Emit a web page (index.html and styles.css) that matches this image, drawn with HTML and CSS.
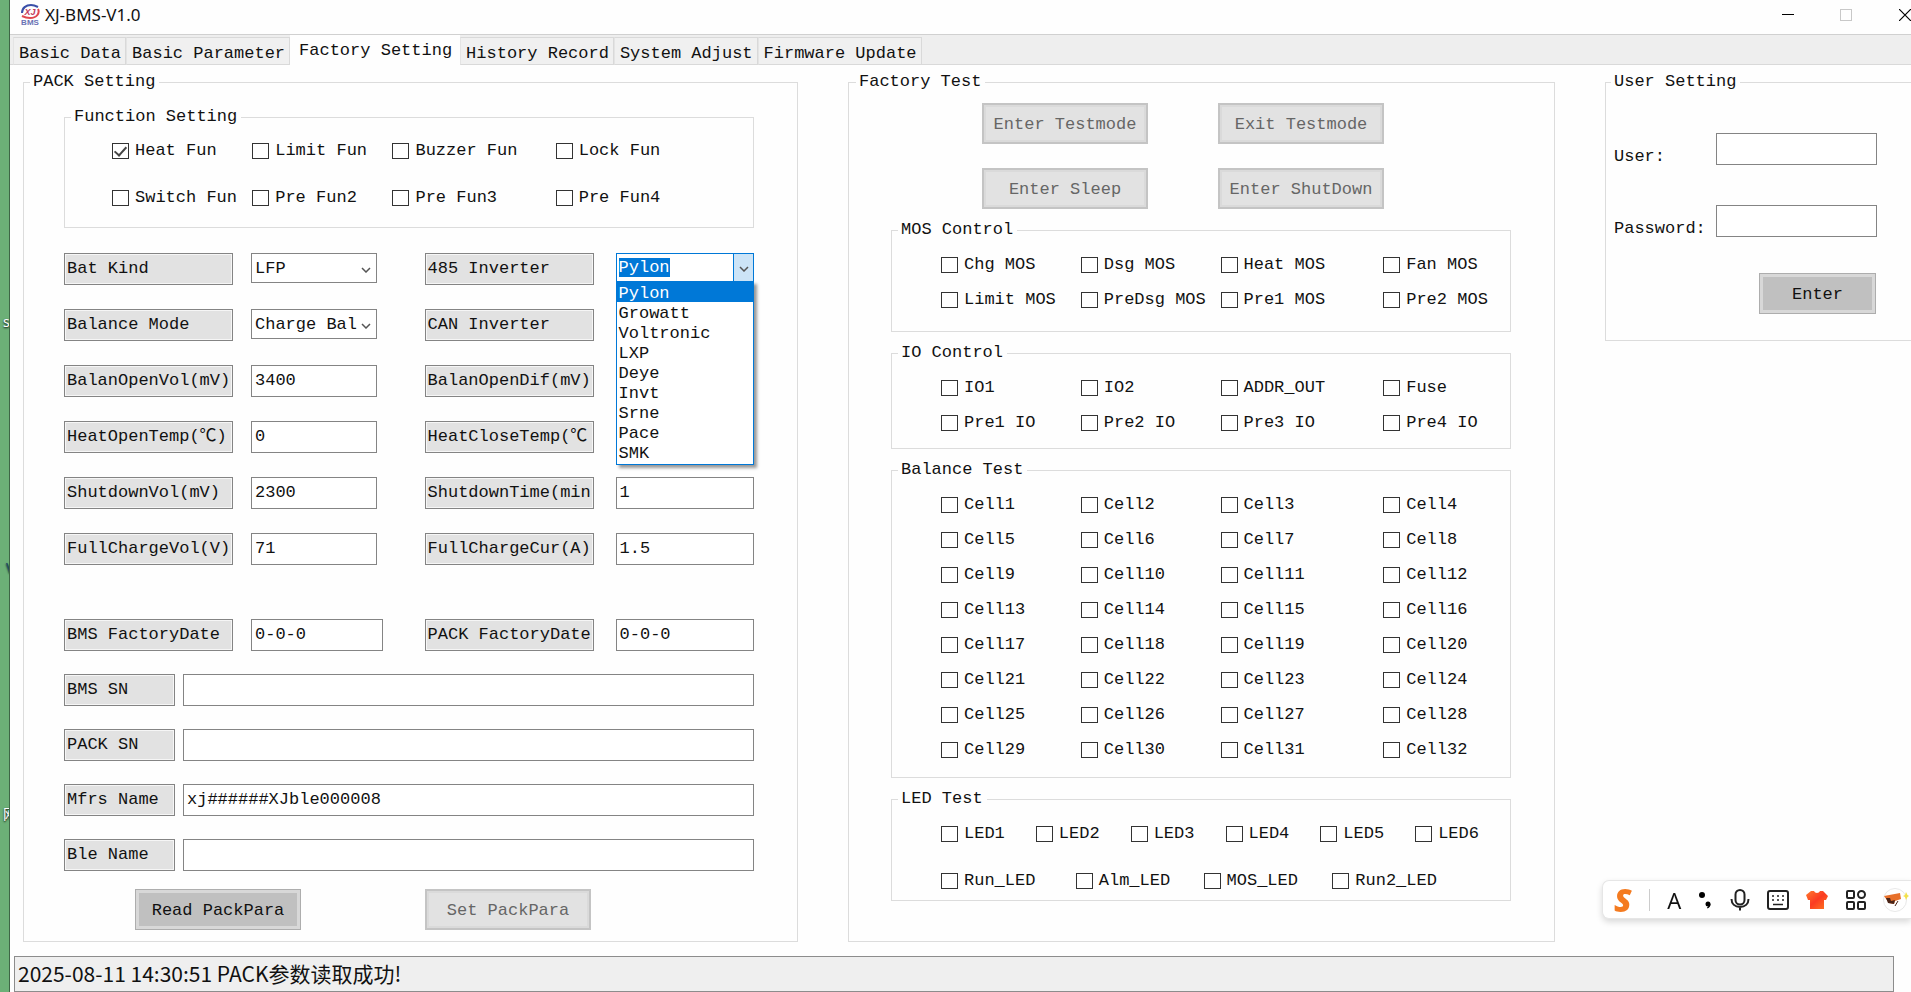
FILE: index.html
```html
<!DOCTYPE html>
<html lang="en">

<head>
    <meta charset="UTF-8">
    <meta name="viewport" content="width=device-width, initial-scale=1.0">
    <title>XJ-BMS-V1.0</title>
    <link rel="stylesheet" href="styles.css">
</head>

<body>
    <div class="desktop" aria-hidden="true">
        <span class="desktop-text first">s</span>
        <span class="desktop-text second">V</span>
        <span class="desktop-text third">网</span>
    </div>

    <div class="window">
        <header class="title-bar">
            <svg class="app-icon" viewBox="0 0 20 22" width="20" height="22">
                <path d="M2 9C2 4 6 1 11 1c3 0 5 1 7 2" fill="none" stroke="#3a4fa8" stroke-width="2" />
                <path d="M18 5c2 4-1 9-8 9-4 0-6-1-8-2" fill="none" stroke="#e0484f" stroke-width="2" />
                <text x="10" y="11" class="icon-xj">XJ</text>
                <text x="10" y="21" class="icon-bms">BMS</text>
            </svg>
            <h1>XJ-BMS-V1.0</h1>
            <div class="window-buttons">
                <button type="button" aria-label="Minimize">
                    <svg width="12" height="12"><path d="M0 5.5h12" stroke="#000" /></svg>
                </button>
                <button type="button" aria-label="Maximize" disabled>
                    <svg width="12" height="12"><rect x=".5" y=".5" width="11" height="11" fill="none" stroke="#c8c8c8" /></svg>
                </button>
                <button type="button" class="close" aria-label="Close">
                    <svg width="12" height="12"><path d="M0 0l13 13M0 12L12 0" stroke="#000" stroke-width="1.2" /></svg>
                </button>
            </div>
        </header>

        <nav class="tabs" role="tablist">
            <button type="button" role="tab">Basic Data</button>
            <button type="button" role="tab">Basic Parameter</button>
            <button type="button" role="tab" class="active" aria-selected="true">Factory Setting</button>
            <button type="button" role="tab">History Record</button>
            <button type="button" role="tab">System Adjust</button>
            <button type="button" role="tab">Firmware Update</button>
        </nav>

        <main class="main-content">
            <fieldset class="pack-setting">
                <legend>PACK Setting</legend>

                <fieldset class="group function-setting">
                    <legend>Function Setting</legend>
                    <div class="check-grid">
                        <label class="check"><input type="checkbox" checked>Heat Fun</label>
                        <label class="check"><input type="checkbox">Limit Fun</label>
                        <label class="check"><input type="checkbox">Buzzer Fun</label>
                        <label class="check"><input type="checkbox">Lock Fun</label>
                        <label class="check"><input type="checkbox">Switch Fun</label>
                        <label class="check"><input type="checkbox">Pre Fun2</label>
                        <label class="check"><input type="checkbox">Pre Fun3</label>
                        <label class="check"><input type="checkbox">Pre Fun4</label>
                    </div>
                </fieldset>

                <div class="param-grid">
                    <label class="tag" for="batKind">Bat Kind</label>
                    <div class="combo">
                        <select id="batKind">
                            <option>LFP</option>
                        </select>
                        <svg class="chevron" width="10" height="6"><path d="M1 1l4 4 4-4" /></svg>
                    </div>
                    <label class="tag" for="inverter485">485 Inverter</label>
                    <div class="combo open">
                        <input type="text" id="inverter485" value="Pylon" role="combobox" aria-expanded="true">
                        <button type="button" class="drop" aria-label="Open list">
                            <svg width="10" height="6"><path d="M1 1l4 4 4-4" /></svg>
                        </button>
                        <select class="drop-list" id="inverterList" size="9" aria-label="485 Inverter">
                            <option selected>Pylon</option>
                            <option>Growatt</option>
                            <option>Voltronic</option>
                            <option>LXP</option>
                            <option>Deye</option>
                            <option>Invt</option>
                            <option>Srne</option>
                            <option>Pace</option>
                            <option>SMK</option>
                        </select>
                    </div>

                    <label class="tag" for="balanceMode">Balance Mode</label>
                    <div class="combo">
                        <select id="balanceMode">
                            <option>Charge Bal</option>
                        </select>
                        <svg class="chevron" width="10" height="6"><path d="M1 1l4 4 4-4" /></svg>
                    </div>
                    <label class="tag" for="inverterCan">CAN Inverter</label>
                    <div class="combo">
                        <select id="inverterCan"></select>
                    </div>

                    <label class="tag" for="balanOpenVol">BalanOpenVol(mV)</label>
                    <input type="text" id="balanOpenVol" value="3400">
                    <label class="tag" for="balanOpenDif">BalanOpenDif(mV)</label>
                    <input type="text" id="balanOpenDif">

                    <label class="tag" for="heatOpenTemp">HeatOpenTemp(℃)</label>
                    <input type="text" id="heatOpenTemp" value="0">
                    <label class="tag" for="heatCloseTemp">HeatCloseTemp(℃</label>
                    <input type="text" id="heatCloseTemp">

                    <label class="tag" for="shutdownVol">ShutdownVol(mV)</label>
                    <input type="text" id="shutdownVol" value="2300">
                    <label class="tag" for="shutdownTime">ShutdownTime(min</label>
                    <input type="text" id="shutdownTime" value="1">

                    <label class="tag" for="fullChargeVol">FullChargeVol(V)</label>
                    <input type="text" id="fullChargeVol" value="71">
                    <label class="tag" for="fullChargeCur">FullChargeCur(A)</label>
                    <input type="text" id="fullChargeCur" value="1.5">
                </div>

                <div class="param-grid dates">
                    <label class="tag" for="bmsDate">BMS FactoryDate</label>
                    <input type="text" id="bmsDate" value="0-0-0">
                    <label class="tag" for="packDate">PACK FactoryDate</label>
                    <input type="text" id="packDate" value="0-0-0">
                </div>

                <div class="name-grid">
                    <label class="tag" for="bmsSn">BMS SN</label>
                    <input type="text" id="bmsSn">
                    <label class="tag" for="packSn">PACK SN</label>
                    <input type="text" id="packSn">
                    <label class="tag" for="mfrsName">Mfrs Name</label>
                    <input type="text" id="mfrsName" value="xj######XJble000008">
                    <label class="tag" for="bleName">Ble Name</label>
                    <input type="text" id="bleName">
                </div>

                <div class="pack-buttons">
                    <button type="button" class="btn">Read PackPara</button>
                    <button type="button" class="btn" disabled>Set PackPara</button>
                </div>
            </fieldset>

            <fieldset class="factory-test">
                <legend>Factory Test</legend>

                <div class="test-buttons">
                    <button type="button" class="btn" disabled>Enter Testmode</button>
                    <button type="button" class="btn" disabled>Exit Testmode</button>
                    <button type="button" class="btn" disabled>Enter Sleep</button>
                    <button type="button" class="btn" disabled>Enter ShutDown</button>
                </div>

                <fieldset class="group mos-control">
                    <legend>MOS Control</legend>
                    <div class="check-grid">
                        <label class="check"><input type="checkbox">Chg MOS</label>
                        <label class="check"><input type="checkbox">Dsg MOS</label>
                        <label class="check"><input type="checkbox">Heat MOS</label>
                        <label class="check"><input type="checkbox">Fan MOS</label>
                        <label class="check"><input type="checkbox">Limit MOS</label>
                        <label class="check"><input type="checkbox">PreDsg MOS</label>
                        <label class="check"><input type="checkbox">Pre1 MOS</label>
                        <label class="check"><input type="checkbox">Pre2 MOS</label>
                    </div>
                </fieldset>

                <fieldset class="group">
                    <legend>IO Control</legend>
                    <div class="check-grid">
                        <label class="check"><input type="checkbox">IO1</label>
                        <label class="check"><input type="checkbox">IO2</label>
                        <label class="check"><input type="checkbox">ADDR_OUT</label>
                        <label class="check"><input type="checkbox">Fuse</label>
                        <label class="check"><input type="checkbox">Pre1 IO</label>
                        <label class="check"><input type="checkbox">Pre2 IO</label>
                        <label class="check"><input type="checkbox">Pre3 IO</label>
                        <label class="check"><input type="checkbox">Pre4 IO</label>
                    </div>
                </fieldset>

                <fieldset class="group balance-test">
                    <legend>Balance Test</legend>
                    <div class="check-grid">
                        <label class="check"><input type="checkbox">Cell1</label>
                        <label class="check"><input type="checkbox">Cell2</label>
                        <label class="check"><input type="checkbox">Cell3</label>
                        <label class="check"><input type="checkbox">Cell4</label>
                        <label class="check"><input type="checkbox">Cell5</label>
                        <label class="check"><input type="checkbox">Cell6</label>
                        <label class="check"><input type="checkbox">Cell7</label>
                        <label class="check"><input type="checkbox">Cell8</label>
                        <label class="check"><input type="checkbox">Cell9</label>
                        <label class="check"><input type="checkbox">Cell10</label>
                        <label class="check"><input type="checkbox">Cell11</label>
                        <label class="check"><input type="checkbox">Cell12</label>
                        <label class="check"><input type="checkbox">Cell13</label>
                        <label class="check"><input type="checkbox">Cell14</label>
                        <label class="check"><input type="checkbox">Cell15</label>
                        <label class="check"><input type="checkbox">Cell16</label>
                        <label class="check"><input type="checkbox">Cell17</label>
                        <label class="check"><input type="checkbox">Cell18</label>
                        <label class="check"><input type="checkbox">Cell19</label>
                        <label class="check"><input type="checkbox">Cell20</label>
                        <label class="check"><input type="checkbox">Cell21</label>
                        <label class="check"><input type="checkbox">Cell22</label>
                        <label class="check"><input type="checkbox">Cell23</label>
                        <label class="check"><input type="checkbox">Cell24</label>
                        <label class="check"><input type="checkbox">Cell25</label>
                        <label class="check"><input type="checkbox">Cell26</label>
                        <label class="check"><input type="checkbox">Cell27</label>
                        <label class="check"><input type="checkbox">Cell28</label>
                        <label class="check"><input type="checkbox">Cell29</label>
                        <label class="check"><input type="checkbox">Cell30</label>
                        <label class="check"><input type="checkbox">Cell31</label>
                        <label class="check"><input type="checkbox">Cell32</label>
                    </div>
                </fieldset>

                <fieldset class="group led-test">
                    <legend>LED Test</legend>
                    <div class="check-grid leds">
                        <label class="check"><input type="checkbox">LED1</label>
                        <label class="check"><input type="checkbox">LED2</label>
                        <label class="check"><input type="checkbox">LED3</label>
                        <label class="check"><input type="checkbox">LED4</label>
                        <label class="check"><input type="checkbox">LED5</label>
                        <label class="check"><input type="checkbox">LED6</label>
                    </div>
                    <div class="check-grid named-leds">
                        <label class="check"><input type="checkbox">Run_LED</label>
                        <label class="check"><input type="checkbox">Alm_LED</label>
                        <label class="check"><input type="checkbox">MOS_LED</label>
                        <label class="check"><input type="checkbox">Run2_LED</label>
                    </div>
                </fieldset>
            </fieldset>

            <fieldset class="user-setting">
                <legend>User Setting</legend>
                <div class="user-grid">
                    <label for="user">User:</label>
                    <input type="text" id="user">
                    <label for="password">Password:</label>
                    <input type="password" id="password">
                </div>
                <button type="button" class="btn enter">Enter</button>
            </fieldset>
        </main>

        <footer class="status-bar">2025-08-11 14:30:51 PACK参数读取成功!</footer>
    </div>

    <!-- input method bar -->
    <div class="ime-bar">
        <span class="ime-logo">S</span>
        <span class="ime-line"></span>
        <span class="ime-letter">A</span>
        <svg width="14" height="18" viewBox="0 0 14 18">
            <circle cx="4" cy="4" r="3" />
            <circle cx="10" cy="13" r="2.5" />
            <path d="M12.5 13c0 2-1 4-3 4.500l-.5-1c1-.5 1.500-1.500 1.500-2.500z" />
        </svg>
        <svg width="20" height="22" viewBox="0 0 20 22" class="line-icon">
            <rect x="5.500" y="1" width="9" height="14.500" rx="4.500" />
            <path d="M1.500 10c0 5 3.500 8 8.500 8s8.500-3 8.500-8M10 18v3.500" />
        </svg>
        <svg width="22" height="20" viewBox="0 0 22 20" class="line-icon">
            <rect x="1" y="1" width="20" height="18" rx="2" />
            <path d="M5 6h2M10 6h2M15 6h2M5 10h2M10 10h2M15 10h2M6 14.500h10" stroke-width="1.500" />
        </svg>
        <svg width="22" height="20" viewBox="0 0 22 20">
            <defs>
                <linearGradient id="shirt" x1="0" y1="0" x2="1" y2="1">
                    <stop offset="0" stop-color="#ff7a2e" />
                    <stop offset=".5" stop-color="#fb3b22" />
                    <stop offset="1" stop-color="#ff7b20" />
                </linearGradient>
            </defs>
            <path d="M5 1l3 0c1 2.500 5 2.500 6 0h3l5 5-2 4h-2v9H4v-9H2L0 5z" fill="url(#shirt)" />
        </svg>
        <svg width="20" height="20" viewBox="0 0 20 20" class="line-icon">
            <rect x="1" y="1" width="7" height="7" rx="1" />
            <circle cx="15.500" cy="4.500" r="3.500" />
            <rect x="1" y="12" width="7" height="7" rx="1" />
            <rect x="12" y="12" width="7" height="7" rx="1" />
        </svg>
        <svg width="26" height="24" viewBox="0 0 26 24">
            <circle cx="12" cy="12" r="11.500" fill="#fff" stroke="#e8e8e8" />
            <path d="M1 8l16-3 1 6-6 2-1 3-5-1z" fill="#e8702a" />
            <path d="M3 10l4 0 1 3 4-1-1 4-6-1z" fill="#4a2518" />
            <path d="M12 18l3-5" stroke="#4a2518" fill="none" />
            <path d="M23 4l1.500 3L26 8l-1.500 1L23 12l-1-3-2-1 2-1z" fill="#f2e14a" />
        </svg>
    </div>

    <script>
        const inverterInput = document.getElementById('inverter485');
        const inverterList = document.getElementById('inverterList');

        inverterList.addEventListener('change', () => {
            inverterInput.value = inverterList.value;
            inverterInput.select();
        });

        inverterInput.focus();
        inverterInput.select();
    </script>
</body>

</html>
```

FILE: styles.css
```css
* {
    box-sizing: border-box;
}

body {
    margin: 0;
    min-height: 100vh;
    display: flex;
    background: #6cb077;
    color: #111;
    font: 17px/20px "Liberation Mono", "Noto Sans CJK SC", monospace;
    overflow: hidden;
}

button,
input,
select {
    font: inherit;
    color: inherit;
    margin: 0;
}

/* desktop strip left of the window */
.desktop {
    position: relative;
    flex: 0 0 9px;
    overflow: hidden;
}

.desktop-text {
    position: absolute;
    left: 3px;
    color: #fff;
    font: 14px/16px "Noto Sans", "Noto Sans CJK SC", sans-serif;
    text-shadow: 0 1px 2px #000;
}

.desktop-text.first {
    top: 314px;
}

.desktop-text.second {
    top: 560px;
    left: 6px;
    color: #1f4b66;
}

.desktop-text.third {
    top: 806px;
}

.window {
    flex: 1;
    min-width: 0;
    border-left: 1px solid #3e6646;
    background: #fefefe;
}

.title-bar {
    display: flex;
    align-items: center;
    height: 34px;
    padding: 0 0 4px 10px;
}

.title-bar h1 {
    margin: 0 0 0 5px;
    font: 17px/20px "Noto Sans", sans-serif;
}

.icon-xj,
.icon-bms {
    font-family: "Liberation Sans", sans-serif;
    font-weight: bold;
    text-anchor: middle;
}

.icon-xj {
    font-size: 9px;
    font-style: italic;
    fill: #c03a5c;
}

.icon-bms {
    font-size: 8px;
    fill: #6a72b4;
}

.window-buttons {
    display: flex;
    margin-left: auto;
}

.window-buttons button {
    display: flex;
    align-items: center;
    justify-content: center;
    width: 58px;
    height: 30px;
    padding: 0;
    border: 0;
    background: none;
}

.window-buttons .close {
    width: 36px;
    justify-content: flex-end;
}

.tabs {
    display: flex;
    align-items: flex-end;
    height: 31px;
    padding-left: 3px;
    border-top: 1px solid #d0d0d0;
    background: #eee;
    box-shadow: inset 0 -1px #d9d9d9;
}

.tabs button {
    height: 28px;
    padding: 5px 4px 0 5px;
    border: 1px solid #d9d9d9;
    border-left-color: #e4e4e4;
    background: #f0f0f0;
    white-space: nowrap;
}

.tabs .active {
    height: 30px;
    padding: 2px 7px 0 8px;
    border-color: #fefefe;
    background: #fefefe;
}

.main-content {
    display: grid;
    grid-template-columns: 775fr 707fr 306fr;
    column-gap: 50px;
    align-items: start;
    padding: 7px 0 14px 13px;
}

fieldset {
    min-width: 0;
    margin: 0;
    padding: 0;
    border: 1px solid #dcdcdc;
}

legend {
    margin-left: 6px;
    padding: 0 4px 0 3px;
}

.pack-setting {
    padding: 15px 43px 11px 40px;
}

.pack-setting > legend {
    margin-left: -34px;
}

.factory-test {
    padding: 11px 43px 40px 42px;
}

.factory-test > legend {
    margin-left: -35px;
}

.check-grid {
    display: grid;
    grid-template-columns: 140fr 140fr 163fr 127fr;
    row-gap: 15px;
    padding: 15px 0 15px 49px;
}

.function-setting .check-grid {
    grid-template-columns: 140fr 140fr 163fr 197fr;
    row-gap: 27px;
    padding: 14px 0 19px 47px;
}

.mos-control .check-grid {
    padding-bottom: 21px;
}

.balance-test .check-grid {
    padding-bottom: 17px;
}

.led-test .leds {
    grid-template-columns: repeat(6, 1fr);
    padding-bottom: 0;
}

.led-test .named-leds {
    grid-template-columns: 135fr 128fr 129fr 178fr;
    padding-top: 27px;
    padding-bottom: 9px;
}

.factory-test .group {
    margin-top: 11px;
}

.check {
    display: flex;
    align-items: center;
    gap: 6px;
    height: 20px;
    line-height: 22px;
    white-space: nowrap;
}

.check input {
    appearance: none;
    display: flex;
    justify-content: center;
    flex: none;
    width: 17px;
    height: 16px;
    border: 1px solid #333;
    background: #fff;
}

.check input:checked::after {
    content: "";
    width: 5px;
    height: 10px;
    border: solid #444;
    border-width: 0 2px 2px 0;
    transform: rotate(42deg);
}

.param-grid {
    display: grid;
    grid-template-columns: 187px 173fr 191px 138fr;
    row-gap: 24px;
    margin-top: 25px;
}

.dates {
    margin-top: 54px;
}

.name-grid {
    display: grid;
    grid-template-columns: 119px 1fr;
    row-gap: 23px;
    margin-top: 23px;
}

.tag {
    width: 169px;
    height: 32px;
    padding: 5px 2px 3px;
    border: 1px solid #848484;
    background: #e2e2e2;
    box-shadow: inset 0 0 0 1px #f6f6f6;
    white-space: nowrap;
    overflow: hidden;
}

.name-grid .tag {
    width: 111px;
}

input[type="text"],
input[type="password"],
.combo select {
    width: 100%;
    height: 32px;
    padding: 0 3px 1px;
    border: 1px solid #848484;
    border-radius: 0;
    background: #fff;
    outline: none;
}

.param-grid > input:nth-of-type(odd),
.param-grid > .combo:not(.open) {
    max-width: 126px;
}

.dates > input:nth-of-type(odd) {
    max-width: 132px;
}

.combo {
    position: relative;
    height: 30px;
}

.combo select {
    display: block;
    appearance: none;
    height: 30px;
    padding: 2px 3px 0;
}

.chevron {
    position: absolute;
    right: 6px;
    top: 14px;
    pointer-events: none;
}

.chevron path,
.drop path {
    fill: none;
    stroke: #555;
    stroke-width: 1.500;
}

.combo.open {
    display: flex;
    height: 29px;
    border: 1px solid #0078d7;
    background: #fff;
}

.combo.open input {
    height: 22px;
    margin: 2px 0 0 2px;
    padding: 0;
    border: 0;
}

.combo.open input::selection {
    background: #0078d7;
    color: #fff;
}

.combo .drop {
    flex: 0 0 20px;
    padding: 0;
    border: 0;
    border-left: 1px solid #0078d7;
    background: #cce4f7;
    line-height: 10px;
}

.combo .drop-list {
    position: absolute;
    z-index: 1;
    top: 27px;
    left: -1px;
    right: -1px;
    width: auto;
    height: 184px;
    padding: 0;
    border: 1px solid #0078d7;
    box-shadow: 3px 3px 3px rgba(0, 0, 0, 0.4);
    overflow: hidden;
}

.drop-list option {
    height: 20px;
    min-height: 20px;
    padding: 2px 2px 0;
    line-height: 20px;
}

.drop-list option:checked {
    background: #0078d7 linear-gradient(#0078d7, #0078d7);
    color: #fff;
}

.btn {
    height: 41px;
    padding: 2px 0 0;
    border: 1px solid #adadad;
    background: #c0c0c0;
    box-shadow: inset 0 0 0 3px #d8d8d8;
}

.btn:disabled {
    border: 2px solid #c4c4c4;
    background: #e2e2e2;
    box-shadow: inset 0 0 0 2px #dadada;
    color: #666;
}

.pack-buttons {
    display: flex;
    gap: 124px;
    margin: 18px 0 0 71px;
}

.pack-buttons .btn {
    width: 166px;
}

.test-buttons {
    display: grid;
    grid-template-columns: 166px 166px;
    gap: 24px 70px;
    margin-left: 91px;
}

.user-setting {
    padding: 41px 0 26px 8px;
    border-right: 0;
}

.user-setting > legend {
    margin-left: -3px;
}

.user-grid {
    display: grid;
    grid-template-columns: 102px 161px;
    align-items: end;
    row-gap: 40px;
    line-height: 16px;
}

.enter {
    display: block;
    width: 117px;
    margin: 36px 0 0 145px;
}

.status-bar {
    height: 36px;
    margin: 0 17px 0 4px;
    padding: 0 3px;
    border: 1px solid #8c8c8c;
    background: #efefef;
    font: 21px/32px "Noto Sans CJK SC", sans-serif;
}

.ime-bar {
    position: fixed;
    right: 0;
    bottom: 73px;
    display: flex;
    align-items: center;
    justify-content: space-between;
    width: 309px;
    height: 39px;
    padding: 0 2px 0 11px;
    border: 1px solid #e6e6e6;
    border-right: 0;
    border-radius: 7px 0 0 7px;
    background: #fff;
    box-shadow: 0 3px 6px rgba(0, 0, 0, 0.15);
}

.ime-logo {
    color: #f47b20;
    font: italic 800 32px/36px "Open Sans", sans-serif;
}

.ime-line {
    width: 1px;
    height: 22px;
    background: #ccc;
}

.ime-letter {
    font: 22px/36px "Noto Sans", sans-serif;
}

.line-icon {
    fill: none;
    stroke: #222;
    stroke-width: 2;
}
```
